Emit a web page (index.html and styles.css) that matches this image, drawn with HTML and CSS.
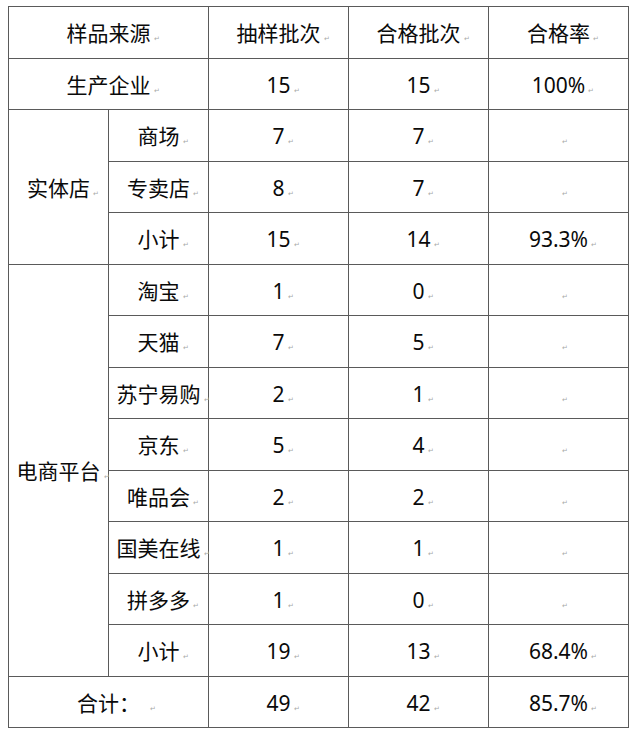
FILE: index.html
```html
<!DOCTYPE html>
<html lang="zh">
<head>
<meta charset="utf-8">
<link rel="stylesheet" href="styles.css">
</head>
<body>
<table class="grid">
  <colgroup>
    <col class="c1"><col class="c2"><col class="c3"><col class="c4"><col class="c5">
  </colgroup>
  <tr><td colspan="2">样品来源<i class="pm">↵</i></td><td>抽样批次<i class="pm">↵</i></td><td>合格批次<i class="pm">↵</i></td><td>合格率<i class="pm">↵</i></td></tr>
  <tr><td colspan="2">生产企业<i class="pm">↵</i></td><td>15<i class="pm">↵</i></td><td>15<i class="pm">↵</i></td><td>100%<i class="pm">↵</i></td></tr>
  <tr><td rowspan="3">实体店<i class="pm">↵</i></td><td>商场<i class="pm">↵</i></td><td>7<i class="pm">↵</i></td><td>7<i class="pm">↵</i></td><td><i class="pm">↵</i></td></tr>
  <tr><td>专卖店<i class="pm">↵</i></td><td>8<i class="pm">↵</i></td><td>7<i class="pm">↵</i></td><td><i class="pm">↵</i></td></tr>
  <tr><td>小计<i class="pm">↵</i></td><td>15<i class="pm">↵</i></td><td>14<i class="pm">↵</i></td><td>93.3%<i class="pm">↵</i></td></tr>
  <tr><td rowspan="8">电商平台<i class="pm">↵</i></td><td>淘宝<i class="pm">↵</i></td><td>1<i class="pm">↵</i></td><td>0<i class="pm">↵</i></td><td><i class="pm">↵</i></td></tr>
  <tr><td>天猫<i class="pm">↵</i></td><td>7<i class="pm">↵</i></td><td>5<i class="pm">↵</i></td><td><i class="pm">↵</i></td></tr>
  <tr><td>苏宁易购<i class="pm">↵</i></td><td>2<i class="pm">↵</i></td><td>1<i class="pm">↵</i></td><td><i class="pm">↵</i></td></tr>
  <tr><td>京东<i class="pm">↵</i></td><td>5<i class="pm">↵</i></td><td>4<i class="pm">↵</i></td><td><i class="pm">↵</i></td></tr>
  <tr><td>唯品会<i class="pm">↵</i></td><td>2<i class="pm">↵</i></td><td>2<i class="pm">↵</i></td><td><i class="pm">↵</i></td></tr>
  <tr><td>国美在线<i class="pm">↵</i></td><td>1<i class="pm">↵</i></td><td>1<i class="pm">↵</i></td><td><i class="pm">↵</i></td></tr>
  <tr><td>拼多多<i class="pm">↵</i></td><td>1<i class="pm">↵</i></td><td>0<i class="pm">↵</i></td><td><i class="pm">↵</i></td></tr>
  <tr><td>小计<i class="pm">↵</i></td><td>19<i class="pm">↵</i></td><td>13<i class="pm">↵</i></td><td>68.4%<i class="pm">↵</i></td></tr>
  <tr><td colspan="2">合计：<i class="pm gap">↵</i></td><td>49<i class="pm">↵</i></td><td>42<i class="pm">↵</i></td><td>85.7%<i class="pm">↵</i></td></tr>
</table>
</body>
</html>
```

FILE: styles.css
```css
html, body {
  margin: 0;
  padding: 0;
  background: #ffffff;
}
body {
  padding: 6px 0 0 8px;
  font-family: "Noto Sans", "Noto Sans CJK SC", sans-serif;
  color: #0a0a0a;
}
.grid {
  border-collapse: collapse;
  table-layout: fixed;
  width: 621px;
}
.c1 { width: 100px; }
.c2 { width: 100px; }
.c3 { width: 140px; }
.c4 { width: 140px; }
.c5 { width: 140px; }
.grid tr {
  height: 51.5px;
}
.grid td {
  border: 1px solid #5a5a5a;
  padding: 2px 0 0;
  text-align: center;
  vertical-align: middle;
  font-size: 21px;
  line-height: 24px;
  white-space: nowrap;
}
.pm {
  display: inline-block;
  width: 0;
  font-style: normal;
  font-size: 7px;
  line-height: 7px;
  color: #a8a8a8;
  text-indent: 3px;
  vertical-align: baseline;
}
.pm.gap {
  text-indent: 10px;
}
```
